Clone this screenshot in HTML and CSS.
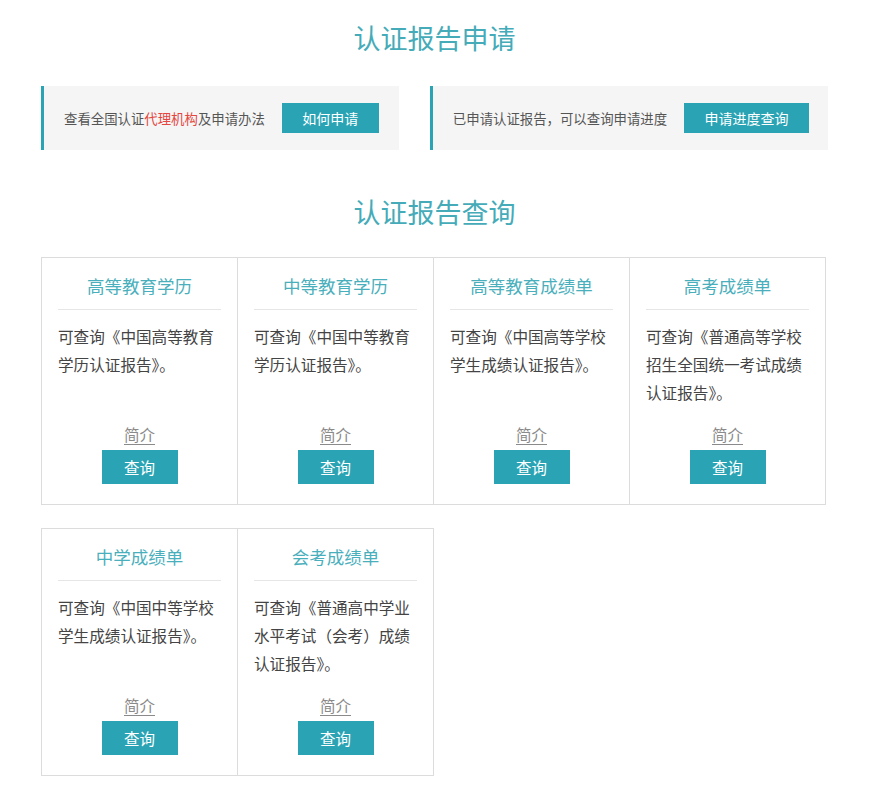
FILE: index.html
```html
<!DOCTYPE html>
<html lang="zh-CN">
<head>
<meta charset="utf-8">
<title>认证报告</title>
<link rel="stylesheet" href="styles.css">
</head>
<body>
<div class="page">
  <h2 class="section-title title-apply">认证报告申请</h2>
  <div class="banners">
    <div class="banner">
      <span class="banner-text">查看全国认证<span class="red">代理机构</span>及申请办法</span>
      <a class="btn btn-banner">如何申请</a>
    </div>
    <div class="banner banner-right">
      <span class="banner-text">已申请认证报告，可以查询申请进度</span>
      <a class="btn btn-banner">申请进度查询</a>
    </div>
  </div>

  <h2 class="section-title title-query">认证报告查询</h2>

  <div class="cards">
    <div class="card">
      <div class="card-title">高等教育学历</div>
      <div class="card-body">可查询《中国高等教育学历认证报告》。</div>
      <a class="card-intro">简介</a>
      <a class="btn btn-card">查询</a>
    </div>
    <div class="card">
      <div class="card-title">中等教育学历</div>
      <div class="card-body">可查询《中国中等教育学历认证报告》。</div>
      <a class="card-intro">简介</a>
      <a class="btn btn-card">查询</a>
    </div>
    <div class="card">
      <div class="card-title">高等教育成绩单</div>
      <div class="card-body">可查询《中国高等学校学生成绩认证报告》。</div>
      <a class="card-intro">简介</a>
      <a class="btn btn-card">查询</a>
    </div>
    <div class="card">
      <div class="card-title">高考成绩单</div>
      <div class="card-body">可查询《普通高等学校招生全国统一考试成绩认证报告》。</div>
      <a class="card-intro">简介</a>
      <a class="btn btn-card">查询</a>
    </div>
  </div>

  <div class="cards cards-second">
    <div class="card">
      <div class="card-title">中学成绩单</div>
      <div class="card-body">可查询《中国中等学校学生成绩认证报告》。</div>
      <a class="card-intro">简介</a>
      <a class="btn btn-card">查询</a>
    </div>
    <div class="card">
      <div class="card-title">会考成绩单</div>
      <div class="card-body">可查询《普通高中学业水平考试（会考）成绩认证报告》。</div>
      <a class="card-intro">简介</a>
      <a class="btn btn-card">查询</a>
    </div>
  </div>
</div>
</body>
</html>
```

FILE: styles.css
```css
* { box-sizing: border-box; }

html, body {
  margin: 0;
  padding: 0;
  background: #ffffff;
}

body {
  font-family: "Noto Sans CJK SC", "Noto Sans", "Liberation Sans", sans-serif;
  color: #444;
}

.page {
  width: 869px;
  padding: 20px 0 0 41px;
}

.section-title {
  margin: 0;
  width: 787px;
  text-align: center;
  font-size: 27px;
  line-height: 36px;
  font-weight: normal;
  color: #45abb8;
}

.title-query {
  margin-top: 44px;
}

.banners {
  display: flex;
  gap: 31px;
  margin-top: 30px;
}

.banner {
  display: flex;
  align-items: center;
  gap: 17px;
  height: 64px;
  padding: 0 20px 0 20px;
  background: #f5f5f6;
  border-left: 3px solid #2aa4b4;
}

.banner-right {
  padding-right: 19px;
}

.banner-text {
  font-size: 13.4px;
  line-height: 20px;
  color: #555;
  white-space: nowrap;
}

.red {
  color: #e4473f;
}

.btn {
  display: flex;
  align-items: center;
  justify-content: center;
  background: #2aa4b4;
  color: #ffffff;
  text-decoration: none;
  white-space: nowrap;
}

.btn-banner {
  height: 30px;
  padding: 0 20.5px;
  font-size: 14px;
}

.cards {
  display: flex;
  margin-top: 27px;
}

.cards-second {
  margin-top: 23px;
}

.card {
  width: 197px;
  border: 1px solid #dcdcdc;
  padding: 16px 16px 20px 16px;
  display: flex;
  flex-direction: column;
  align-items: center;
}

.card + .card {
  margin-left: -1px;
}

.card-title {
  width: 100%;
  text-align: center;
  font-size: 17.5px;
  line-height: 24px;
  color: #4aafbc;
  padding-bottom: 11px;
  border-bottom: 1px solid #e6e6e6;
}

.card-body {
  width: 100%;
  margin-top: 12px;
  height: 84px;
  font-size: 15.6px;
  line-height: 28px;
  color: #444;
}

.card-intro {
  margin-top: 18px;
  font-size: 15.5px;
  line-height: 20px;
  color: #8a8a8a;
  text-decoration: underline;
  text-underline-offset: 3px;
}

.btn-card {
  margin-top: 6px;
  width: 76px;
  height: 34px;
  font-size: 15.5px;
}
```
